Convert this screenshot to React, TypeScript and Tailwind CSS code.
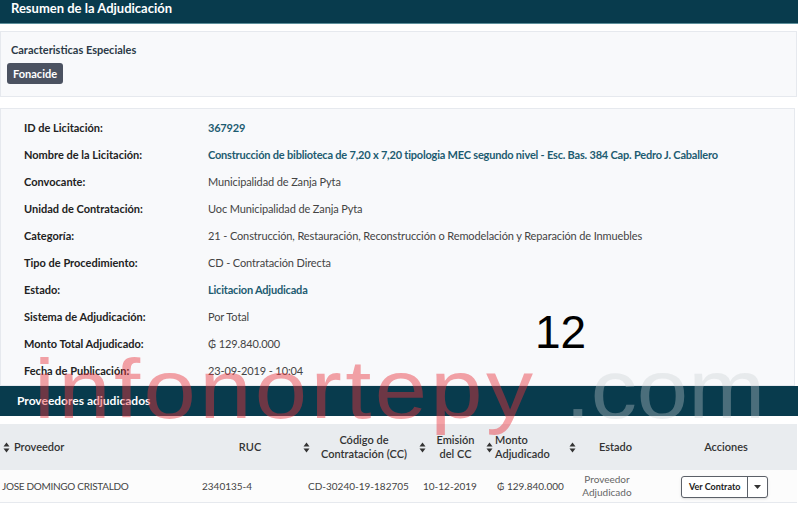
const ROWS: { label: string; value: string; link?: boolean }[] = [
  { label: 'ID de Licitación:', value: '367929', link: true },
  {
    label: 'Nombre de la Licitación:',
    value: 'Construcción de biblioteca de 7,20 x 7,20 tipologia MEC segundo nivel - Esc. Bas. 384 Cap. Pedro J. Caballero',
    link: true,
  },
  { label: 'Convocante:', value: 'Municipalidad de Zanja Pyta' },
  { label: 'Unidad de Contratación:', value: 'Uoc Municipalidad de Zanja Pyta' },
  { label: 'Categoría:', value: '21 - Construcción, Restauración, Reconstrucción o Remodelación y Reparación de Inmuebles' },
  { label: 'Tipo de Procedimiento:', value: 'CD - Contratación Directa' },
  { label: 'Estado:', value: 'Licitacion Adjudicada', link: true },
  { label: 'Sistema de Adjudicación:', value: 'Por Total' },
  { label: 'Monto Total Adjudicado:', value: '₲ 129.840.000' },
  { label: 'Fecha de Publicación:', value: '23-09-2019 - 10:04' },
];

function SortIcon() {
  return (
    <svg width="7" height="11" viewBox="0 0 7 11" className="shrink-0">
      <path d="M3.5 0.5 L6.5 4.5 L0.5 4.5 Z" fill="#333" />
      <path d="M3.5 10.5 L6.5 6.5 L0.5 6.5 Z" fill="#333" />
    </svg>
  );
}

export default function App() {
  return (
    <div className="relative w-[800px] h-[508px] bg-white overflow-hidden font-['Lato',sans-serif] text-[#333]">
      {/* top bar */}
      <div className="h-[24px] mr-[2px] bg-[#083b4d] border-b border-[#5d8f9b] pl-[11px]">
        <h1 className="text-[13px] font-bold text-white leading-[16px]">Resumen de la Adjudicación</h1>
      </div>

      {/* special characteristics */}
      <div className="mt-[7px] mr-[3px] h-[66px] bg-[#f8f9fb] border border-[#e6e9ee] pl-[10px] pt-[11px]">
        <div className="text-[11px] font-bold text-[#2c3a47] leading-[14px]">Caracteristicas Especiales</div>
        <span className="inline-block mt-[6px] -ml-[4px] px-[6px] h-[21px] leading-[21px] rounded-[3px] bg-[#4b5261] text-white text-[11px] font-bold">
          Fonacide
        </span>
      </div>

      {/* details */}
      <div className="mt-[11px] mr-[5px] h-[278px] bg-[#f8f9fb] border border-[#e6e9ee] pt-[6px]">
        {ROWS.map(r => (
          <div key={r.label} className="flex items-center h-[27px] text-[11px]">
            <div className="w-[207px] pl-[23px] font-bold text-[#222]">{r.label}</div>
            <div className={r.link ? 'font-bold text-[#1d5c71] tracking-[-0.2px]' : 'text-[#444] tracking-[-0.12px]'}>
              {r.value}
            </div>
          </div>
        ))}
      </div>

      {/* providers bar */}
      <div className="h-[30px] mr-[2px] bg-[#083b4d] pl-[17px] flex items-center">
        <h2 className="text-[12px] font-bold text-white">Proveedores adjudicados</h2>
      </div>

      {/* table */}
      <div className="mt-[8px] mr-[3px] text-[11px]">
        <div className="flex h-[46px] bg-[#e9ecef] items-center font-semibold text-[#333] leading-[14px]">
          <div className="w-[200px] flex items-center gap-[4px] pl-[3px]">
            <SortIcon />
            <span>Proveedor</span>
          </div>
          <div className="w-[100px] text-center">RUC</div>
          <div className="w-[118px] flex items-center pl-[3px]">
            <SortIcon />
            <span className="flex-1 text-center">Código de<br />Contratación (CC)</span>
          </div>
          <div className="w-[67px] flex items-center pl-[1px]">
            <SortIcon />
            <span className="flex-1 text-center">Emisión<br />del CC</span>
          </div>
          <div className="w-[82px] flex items-center gap-[2px] pl-[1px]">
            <SortIcon />
            <span>Monto<br />Adjudicado</span>
          </div>
          <div className="w-[88px] flex items-center pl-[2px]">
            <SortIcon />
            <span className="flex-1 text-center">Estado</span>
          </div>
          <div className="flex-1 text-center">Acciones</div>
        </div>
        <div className="flex h-[33px] items-center bg-[#fcfcfc] border-b border-[#e6e9ee] text-[10px] text-[#444] leading-[13px] whitespace-nowrap">
          <div className="w-[200px] pl-[2px] tracking-[-0.3px]">JOSE DOMINGO CRISTALDO</div>
          <div className="w-[100px] pl-[2px]">2340135-4</div>
          <div className="w-[118px] pl-[8px]">CD-30240-19-182705</div>
          <div className="w-[67px] pl-[5px]">10-12-2019</div>
          <div className="w-[82px] pl-[12px]">₲ 129.840.000</div>
          <div className="w-[88px] text-center text-[#666] pr-[8px]">Proveedor<br />Adjudicado</div>
          <div className="flex-1 pl-[26px] pt-[1px]">
            <div className="inline-flex h-[22px] border border-[#5b6068] rounded-[3px] bg-white shadow-sm">
              <span className="px-[7px] leading-[20px] text-[9px] font-bold text-[#222] border-r border-[#5b6068]">Ver Contrato</span>
              <span className="w-[19px] flex items-center justify-center">
                <svg width="7" height="4" viewBox="0 0 7 4">
                  <path d="M0 0 L7 0 L3.5 4 Z" fill="#333" />
                </svg>
              </span>
            </div>
          </div>
        </div>
      </div>

      {/* page number */}
      <div className="absolute left-[535px] top-[304px] font-['Liberation_Sans',Arial,sans-serif] text-[46px] leading-[56px] text-black">
        12
      </div>

      {/* watermark */}
      <div className="absolute left-[34px] top-[347px] pointer-events-none font-['Liberation_Sans',Arial,sans-serif] text-[84px] leading-[84px] tracking-[3px] whitespace-nowrap origin-left scale-x-[1.12] text-[#e8323c]/45">
        infonortepy
      </div>
      <div className="absolute left-[565px] top-[347px] pointer-events-none font-['Liberation_Sans',Arial,sans-serif] text-[84px] leading-[84px] whitespace-nowrap origin-left scale-x-[1.1] text-[#c8cdd2]/35">
        .com
      </div>
    </div>
  );
}
